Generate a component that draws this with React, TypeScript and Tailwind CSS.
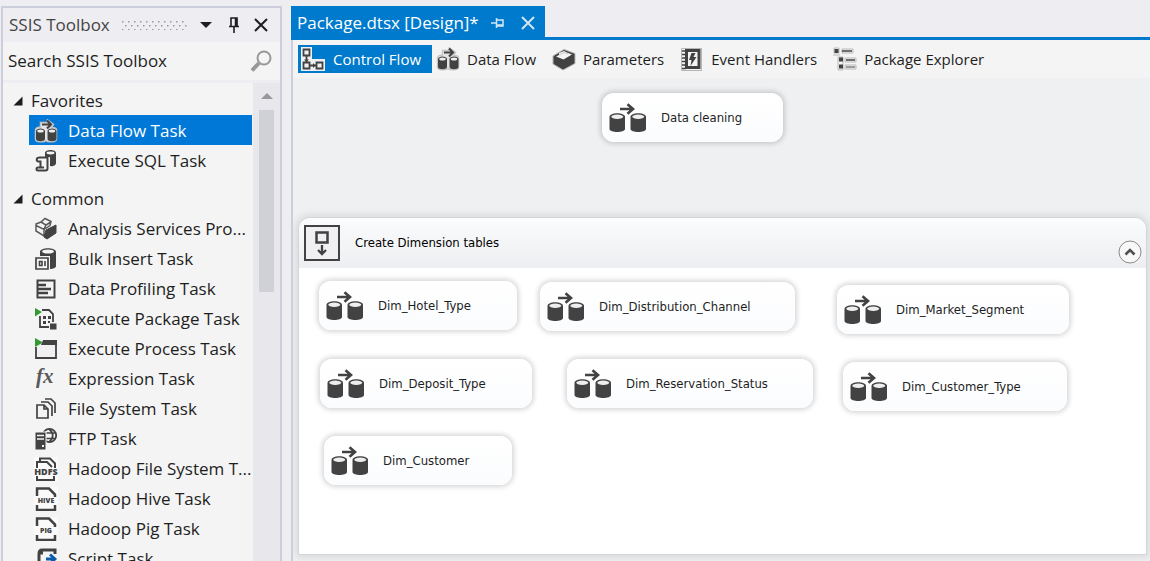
import type { ReactNode } from "react";

const INK = "#424242";

function DataFlowGlyph() {
  return (
    <svg viewBox="0 0 38 30" className="h-[30px] w-[38px] shrink-0" aria-hidden="true">
      <path d="M11 6h12.500M18.500 1.200l5.500 4.800-5.500 4.800" fill="none" stroke={INK} strokeWidth="2.600" />
      <path d="M0.500 14c0-5 15.500-5 15.500 0v12c0 4-15.500 4-15.500 0z" fill={INK} />
      <path d="M21.500 14c0-5 15.500-5 15.500 0v12c0 4-15.500 4-15.500 0z" fill={INK} />
      <ellipse cx="8.250" cy="13.800" rx="6" ry="2.200" fill="#eeeef0" />
      <ellipse cx="29.250" cy="13.800" rx="6" ry="2.200" fill="#eeeef0" />
    </svg>
  );
}

function Glyph({ children }: { children: ReactNode }) {
  return (
    <svg viewBox="0 0 24 24" className="size-6 shrink-0" fill="none" stroke={INK} strokeWidth="2" aria-hidden="true">
      {children}
    </svg>
  );
}

function SmallDataFlowGlyph() {
  return (
    <Glyph>
      <path
        d="M1.500 11c0-2 3-3 5-3V3.500h7V1l6 4.500-2 3c3 0 5 1 5 2.500v9c0 3.500-9 3.500-10.500 1.500C10 23.500 1.500 23.500 1.500 20z"
        fill="#e4e4e6"
        stroke="#c6c6c8"
        strokeWidth="1.500"
      />
      <path d="M8 5.500h8M13 1.500l4 4-4 4" strokeWidth="2.200" />
      <path d="M2 12c0-3.500 9-3.500 9 0v8c0 3-9 3-9 0zM13.500 12c0-3.500 9-3.500 9 0v8c0 3-9 3-9 0z" fill={INK} stroke="none" />
      <ellipse cx="6.500" cy="12" rx="3.200" ry="1.500" fill="#eeeef0" stroke="none" />
      <ellipse cx="18" cy="12" rx="3.200" ry="1.500" fill="#eeeef0" stroke="none" />
    </Glyph>
  );
}

function PageGlyph({ label, stacked = false }: { label: string; stacked?: boolean }) {
  return (
    <Glyph>
      <path d="M0 0h24v24H0z" fill="#fafafa" stroke="none" />
      {stacked ? (
        <path d="M3 11V5h10l5 5M6 4V1.500h10l5 5V11M3 19v4h17v-4" />
      ) : (
        <path d="M3 9V1.500h12l6 6V10M3 18v5h18v-5" strokeWidth="2.500" />
      )}
      <text
        x="12"
        y={stacked ? 18 : 16}
        textAnchor="middle"
        fill={INK}
        stroke="none"
        fontFamily="Open Sans, sans-serif"
        fontWeight="800"
        fontSize={stacked ? 9 : 7}
      >
        {label}
      </text>
    </Glyph>
  );
}

const favorites: { label: string; icon: ReactNode; selected?: boolean }[] = [
  { label: "Data Flow Task", icon: <SmallDataFlowGlyph />, selected: true },
  {
    label: "Execute SQL Task",
    icon: (
      <Glyph>
        <path d="M11 4c0-4 11-4 11 0v10c0 3-4 3.500-6 3V8h-5z" fill={INK} stroke="none" />
        <ellipse cx="16.500" cy="4" rx="4" ry="1.400" fill="#f4f4f4" stroke="none" />
        <path d="M5 8.500h8.500v11c0 1.500-1 2-2 2H4c-2 0-2-3 0-3h6M5.500 8.500c-3.500 0-3.500 4-1 4h2v6" />
      </Glyph>
    ),
  },
];

const common: { label: string; icon: ReactNode }[] = [
  {
    label: "Analysis Services Pro...",
    icon: (
      <Glyph>
        <path d="M2 7l5-2 4-3.500 6 3-1 4-6 4-8-4zM2 7v7l8 5v-7M7 5l5 3-2 4M12 8l5-3" strokeWidth="1.500" stroke="#5a5a5a" />
        <path d="M12 13l10-5v8l-9 6-3-2z" fill={INK} stroke={INK} strokeWidth="1" />
      </Glyph>
    ),
  },
  {
    label: "Bulk Insert Task",
    icon: (
      <Glyph>
        <path d="M6 5c0-5 16-5 16 0v14c0 2-3 3-6 3V9H6z" fill={INK} stroke="none" />
        <ellipse cx="14" cy="4.500" rx="6" ry="2" fill="#f4f4f4" stroke="none" />
        <path d="M2 11h12v11H2z" fill="#f4f4f4" strokeWidth="1.700" />
        <path d="M5.500 14.500h2.500v4H5.500zM11 14v5" strokeWidth="1.600" />
      </Glyph>
    ),
  },
  {
    label: "Data Profiling Task",
    icon: (
      <Glyph>
        <path d="M3.500 3.500h17v17h-17z" />
        <path d="M4 8h8M4 12h13M4 16h10" strokeWidth="2.300" />
      </Glyph>
    ),
  },
  {
    label: "Execute Package Task",
    icon: (
      <Glyph>
        <path d="M8 3h7l4 4v8M6 9v11h9" strokeWidth="1.800" />
        <path d="M9 9h3v3H9zM14 9h3v3h-3zM9 14h3v3H9zM14 14h2v2h-2zM16 16.500h6.500v6H16z" fill={INK} stroke="none" />
        <path d="M1 1l7 4-7 4.500z" fill="#339933" stroke="none" />
      </Glyph>
    ),
  },
  {
    label: "Execute Process Task",
    icon: (
      <Glyph>
        <path d="M2 10v11h20V4H9" fill="#f0eff1" strokeWidth="1.800" />
        <path d="M9 3h14v5H7z" fill={INK} stroke="none" />
        <path d="M1 1l8 4.500L1 10z" fill="#339933" stroke="none" />
      </Glyph>
    ),
  },
  {
    label: "Expression Task",
    icon: (
      <Glyph>
        <text
          x="2"
          y="16"
          fill="#5a5a5a"
          stroke="none"
          fontFamily="Liberation Serif, serif"
          fontStyle="italic"
          fontWeight="700"
          fontSize="21"
        >
          fx
        </text>
      </Glyph>
    ),
  },
  {
    label: "File System Task",
    icon: (
      <Glyph>
        <path d="M3 8h7l4 4v9H3zM7 5h7l4 4v10M11 2h6l4 4v10M10 8v4h4" strokeWidth="1.700" />
      </Glyph>
    ),
  },
  {
    label: "FTP Task",
    icon: (
      <Glyph>
        <circle cx="15.500" cy="8.500" r="6.700" strokeWidth="1.800" />
        <path d="M9 6h13M9 11.500h13M15 2c5 4 5 9 0 13" strokeWidth="1.700" />
        <path d="M1 5h11v18H1z" fill={INK} stroke="#f4f4f4" strokeWidth="1" />
        <path d="M3 8.500h7M3 12h7" stroke="#f4f4f4" strokeWidth="1.400" />
        <path d="M8 19h2" stroke="#f4f4f4" />
      </Glyph>
    ),
  },
  { label: "Hadoop File System T...", icon: <PageGlyph label="HDFS" stacked /> },
  { label: "Hadoop Hive Task", icon: <PageGlyph label="HIVE" /> },
  { label: "Hadoop Pig Task", icon: <PageGlyph label="PIG" /> },
  {
    label: "Script Task",
    icon: (
      <Glyph>
        <path d="M21 7V3H8C5 3 5 5 5 7v15h13M4 6h5" strokeWidth="3" />
        <path d="M12 12h8M16 7.500l5 4.500-5 4.500" stroke="#0b5cad" strokeWidth="2.800" />
      </Glyph>
    ),
  },
];

function TreeGroup({ title, items }: { title: string; items: { label: string; icon: ReactNode; selected?: boolean }[] }) {
  return (
    <section className="mb-2 shrink-0">
      <button className="flex h-[30px] w-full items-center gap-2 pl-[10px] pt-[2px]">
        <svg viewBox="0 0 10 10" className="size-[10px]" aria-hidden="true">
          <path d="M9.500 0.500v9H0.500z" fill="#1e1e1e" />
        </svg>
        {title}
      </button>
      <ul>
        {items.map((item) => (
          <li key={item.label} className="pl-[26px]">
            <button
              className={
                item.selected
                  ? "flex h-[30px] w-full items-center gap-[10px] bg-[#0078d7] pl-[5px] pt-[2px] whitespace-nowrap text-white"
                  : "flex h-[30px] w-full items-center gap-[10px] pl-[5px] pt-[2px] whitespace-nowrap"
              }
            >
              {item.icon}
              {item.label}
            </button>
          </li>
        ))}
      </ul>
    </section>
  );
}

function Toolbox() {
  return (
    <aside className="ml-px mt-[6px] flex w-[281px] shrink-0 flex-col border-2 border-b-0 border-[#cccedb] bg-[#f4f4f4] font-['Open_Sans',sans-serif] text-[17px] text-[#1e1e1e]">
      <header className="flex h-[34px] shrink-0 items-center bg-[#eeeef2] pl-[6px] pr-3">
        <h1 className="text-[#444444]">SSIS Toolbox</h1>
        <svg className="ml-3 h-[9px] min-w-0 flex-1" aria-hidden="true">
          <defs>
            <pattern id="grip" width="6" height="8" patternUnits="userSpaceOnUse">
              <path d="M0 0h1.500v1.500H0zM3 4h1.500v1.500H3z" fill="#999999" />
            </pattern>
          </defs>
          <rect width="100%" height="9" fill="url(#grip)" />
        </svg>
        <button aria-label="Window position" className="ml-3">
          <svg viewBox="0 0 12 6" className="h-[6px] w-3">
            <path d="M0 0h12L6 6z" fill="#1e1e1e" />
          </svg>
        </button>
        <button aria-label="Auto hide" className="ml-4">
          <svg viewBox="0 0 12 16" className="h-4 w-3" fill="none" stroke="#1e1e1e" strokeWidth="1.600">
            <path d="M3 9V1h6v8M1 9.500h10M6 10v6" />
            <path d="M8 1v8" strokeWidth="2.500" />
          </svg>
        </button>
        <button aria-label="Close toolbox" className="ml-[14px]">
          <svg viewBox="0 0 14 14" className="size-[14px]" stroke="#1e1e1e" strokeWidth="2">
            <path d="M1 1l12 12M13 1L1 13" />
          </svg>
        </button>
      </header>
      <div className="flex h-[38px] shrink-0 items-center pl-[5px] pr-2">
        <input
          aria-label="Search SSIS Toolbox"
          placeholder="Search SSIS Toolbox"
          className="min-w-0 flex-1 bg-transparent outline-none placeholder:text-[#1e1e1e]"
        />
        <svg viewBox="0 0 22 22" className="size-[22px]" fill="none" stroke="#999999" aria-hidden="true">
          <circle cx="14" cy="8" r="6.500" strokeWidth="2" />
          <path d="M9 13l-7 7.500" strokeWidth="4" />
        </svg>
      </div>
      <div className="flex min-h-0 flex-1 border-t-[3px] border-[#eeeef2]">
        <nav className="flex min-w-0 flex-1 flex-col overflow-hidden pr-px pt-[2px]">
          <TreeGroup title="Favorites" items={favorites} />
          <TreeGroup title="Common" items={common} />
        </nav>
        <div className="flex w-[27px] shrink-0 flex-col items-center bg-[#e8e8ec] pt-[10px]">
          <svg viewBox="0 0 12 6" className="h-[6px] w-3 shrink-0" aria-hidden="true">
            <path d="M6 0l6 6H0z" fill="#999999" />
          </svg>
          <div className="mt-[11px] h-[182px] w-[15px] shrink-0 bg-[#d0d1d7]" />
        </div>
      </div>
    </aside>
  );
}

const tabs: { label: string; icon: ReactNode; active?: boolean }[] = [
  {
    label: "Control Flow",
    active: true,
    icon: (
      <Glyph>
        <path d="M0 0h11v12h13v12H0z" fill="#f0eff1" stroke="none" />
        <path d="M2.500 2.500h6v6h-6zM2.500 15.500h6v6h-6zM15.500 15.500h6v6h-6zM5.500 9v6M9 18.500h6" strokeWidth="1.800" />
        <path d="M3 12.500h5L5.500 15zM12 16v5l2.500-2.500z" fill={INK} stroke="none" />
      </Glyph>
    ),
  },
  { label: "Data Flow", icon: <SmallDataFlowGlyph /> },
  {
    label: "Parameters",
    icon: (
      <Glyph>
        <path d="M1 9L12 2.500l11 4v10l-12 6.500L1 17z" fill={INK} stroke="#b5b5b5" strokeWidth="1" />
        <path d="M4 9.500l3-1.500V6l5-2 3 1.500 5 2-8.500 5z" fill="#f4f4f4" stroke="none" />
        <path d="M7 8l5-2.500 4 1.500" stroke="#c8c8c8" strokeWidth="1" />
      </Glyph>
    ),
  },
  {
    label: "Event Handlers",
    icon: (
      <Glyph>
        <path d="M1.500 1.500h20v22h-20z" fill="#f4f4f4" stroke="#b5b5b5" strokeWidth="1" />
        <path d="M6.500 3.500h12.500v17H6.500z" strokeWidth="3" />
        <path d="M2 4h4M2 7.500h4M2 11h4M2 14.500h4M2 18h4M2 21.500h4" strokeWidth="1.600" />
        <path d="M11.500 6h4l-2 4h3l-6 9 1-6h-2.500z" fill={INK} stroke="none" />
      </Glyph>
    ),
  },
  {
    label: "Package Explorer",
    icon: (
      <Glyph>
        <path d="M1 1h5v5H1zM9 2h11v4H9zM5 10h5v13H5zM12 11h11v4H12zM12 18h11v4H12z" fill="#f4f4f4" stroke="#b9b9b9" strokeWidth="1" />
        <path d="M1.500 2h4v4h-4zM6 10.500h4v4H6zM6 17.500h4v4H6z" fill={INK} stroke="none" />
        <path d="M9 4h10M13 13h9" strokeWidth="1.400" />
        <path d="M13 20h9" stroke="#777777" strokeWidth="1.400" />
        <path d="M0 8h7" stroke="#b9b9b9" strokeWidth="1" />
      </Glyph>
    ),
  },
];

function Node({ label, place }: { label: string; place: string }) {
  return (
    <div
      className={`absolute flex h-[49px] items-center gap-[14px] rounded-xl bg-linear-to-b from-white to-[#fbfcfe] pl-[7px] text-[#1e1e1e] shadow-[0_0_5px_2px_rgba(0,0,0,0.16)] ${place}`}
    >
      <DataFlowGlyph />
      <span className="whitespace-nowrap">{label}</span>
    </div>
  );
}

const dimensionNodes = [
  { label: "Dim_Hotel_Type", place: "left-[20px] top-[63px] w-[198px]" },
  { label: "Dim_Distribution_Channel", place: "left-[241px] top-[64px] w-[255px]" },
  { label: "Dim_Market_Segment", place: "left-[538px] top-[67px] w-[232px]" },
  { label: "Dim_Deposit_Type", place: "left-[21px] top-[141px] w-[212px]" },
  { label: "Dim_Reservation_Status", place: "left-[268px] top-[141px] w-[246px]" },
  { label: "Dim_Customer_Type", place: "left-[544px] top-[144px] w-[224px]" },
  { label: "Dim_Customer", place: "left-[25px] top-[218px] w-[188px]" },
];

function Designer() {
  return (
    <main className="ml-[9px] mt-[6px] flex min-w-0 flex-1 flex-col font-['Open_Sans',sans-serif]">
      <div className="flex shrink-0 border-b-[3px] border-[#007acc]">
        <div className="flex h-[31px] w-[254px] items-center bg-[#007acc] pl-[6px] pt-[3px] text-[17px] text-white">
          <span className="whitespace-nowrap">Package.dtsx [Design]*</span>
          <button aria-label="Pin tab" className="ml-auto">
            <svg viewBox="0 0 14 10" className="h-[10px] w-[14px]" fill="none" stroke="#d0e6f5" strokeWidth="1.500">
              <path d="M0 5h5M5.500 0v10M6 2h6v6H6M6 7h6" />
            </svg>
          </button>
          <button aria-label="Close tab" className="ml-4 mr-[10px]">
            <svg viewBox="0 0 14 14" className="size-[14px]" stroke="#d0e6f5" strokeWidth="2">
              <path d="M1 1l12 12M13 1L1 13" />
            </svg>
          </button>
        </div>
      </div>
      <div className="flex min-h-0 flex-1 flex-col border-l-2 border-[#cccedb]">
        <div className="flex h-[38px] shrink-0 items-center bg-[#f4f4f4] pl-[5px] text-[15px] text-[#1e1e1e]">
          {tabs.map((tab) => (
            <button
              key={tab.label}
              className={
                tab.active
                  ? "mr-1 flex h-7 items-center gap-2 bg-[#007acc] pl-[3px] pr-[11px] whitespace-nowrap text-white"
                  : "mr-4 flex h-7 items-center gap-[7px] whitespace-nowrap"
              }
            >
              {tab.icon}
              {tab.label}
            </button>
          ))}
        </div>
        <div className="relative min-h-0 flex-1 overflow-hidden bg-[#eff0f2] font-['DejaVu_Sans_Condensed','DejaVu_Sans',sans-serif] text-[13px]">
          <Node label="Data cleaning" place="left-[309px] top-[15px] w-[181px]" />
          <section className="absolute left-[5px] right-[3px] top-[139px] h-[338px] rounded-t-xl border border-[#d4d5d8] bg-white shadow-[0_0_8px_2px_rgba(0,0,0,0.1)]">
            <header className="flex h-[50px] items-center rounded-t-xl bg-linear-to-b from-[#fbfcfc] to-[#edeef1] pl-[5px] pr-1 text-black">
              <svg viewBox="0 0 36 36" className="size-9 shrink-0" fill="none" stroke={INK} strokeWidth="2" aria-hidden="true">
                <path d="M1 1h34v34H1z" fill="#f0eff1" />
                <path d="M12.500 7.500h11v10h-11z" strokeWidth="2.500" />
                <path d="M18 20v9M14 25l4 4 4-4" strokeWidth="2.300" />
              </svg>
              <h2 className="ml-[15px]">Create Dimension tables</h2>
              <button aria-label="Collapse" className="ml-auto mt-[18px]">
                <svg viewBox="0 0 24 24" className="size-6" fill="none">
                  <circle cx="12" cy="12" r="11" fill="#f8f8f9" stroke="#8a8a8a" />
                  <path d="M7.500 14.500L12 10l4.500 4.500" stroke="#505050" strokeWidth="2.600" />
                </svg>
              </button>
            </header>
            {dimensionNodes.map((node) => (
              <Node key={node.label} {...node} />
            ))}
          </section>
        </div>
      </div>
    </main>
  );
}

export default function App() {
  return (
    <div className="flex h-screen overflow-hidden bg-[#eeeef2]">
      <Toolbox />
      <Designer />
    </div>
  );
}
